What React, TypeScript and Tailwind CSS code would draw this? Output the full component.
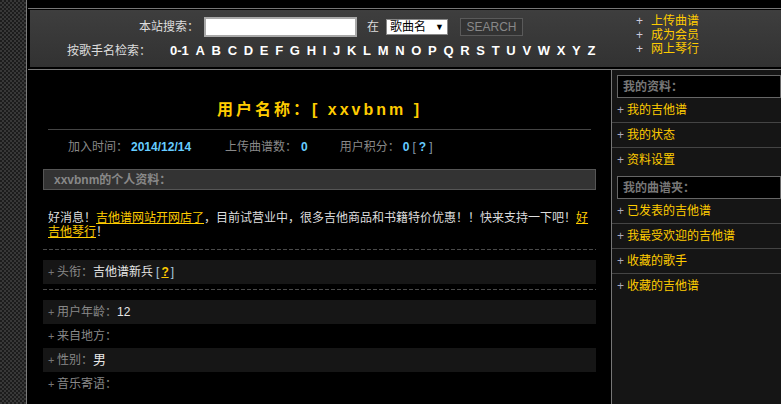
import React from "react";

const letters = "ABCDEFGHIJKLMNOPQRSTUVWXYZ".split("");

function InfoRow({
  label,
  shaded,
  children,
}: {
  label: string;
  shaded?: boolean;
  children?: React.ReactNode;
}) {
  return (
    <div
      className={
        shaded
          ? "h-[24px] flex items-center pl-[5px] bg-[#161616] leading-[14px]"
          : "h-[24px] flex items-center pl-[5px] leading-[14px]"
      }
    >
      <span className="text-[#777] text-[11px] w-[9px]">+</span>
      <span className="text-[#888]">{label}</span>
      {children}
    </div>
  );
}

function Dashed() {
  return (
    <div className="h-px bg-[image:repeating-linear-gradient(90deg,#4a4a4a_0_4px,transparent_4px_6px)]" />
  );
}

function SideHeader({ text }: { text: string }) {
  return (
    <div className="ml-[5px] h-[23px] border border-[#666] bg-black pl-[5px] flex items-center">
      <span className="font-bold text-[#777] leading-[14px]">{text}</span>
    </div>
  );
}

function SideItem({ text, last }: { text: string; last?: boolean }) {
  return (
    <>
      <div className="h-[24px] flex items-center pl-[5px] leading-[14px]">
        <span className="text-[#aab] w-[10px]">+</span>
        <span className="text-[#ffcc00]">{text}</span>
      </div>
      {!last && <div className="h-px bg-[#444]" />}
    </>
  );
}

export default function App() {
  return (
    <div className="w-[781px] h-[404px] overflow-hidden bg-black flex font-[Liberation_Sans,Noto_Sans_CJK_SC,sans-serif] text-[12px]">
      <div className="w-[26px] shrink-0 bg-[image:repeating-conic-gradient(#383838_0_25%,#1c1c1c_0_50%)] bg-[length:4px_4px]" />
      <div className="w-px shrink-0 bg-[#7a7a7a]" />
      <div className="flex-1 min-w-0 flex flex-col pl-px">
        <div className="h-[8px] shrink-0" />
        <div className="h-px shrink-0 bg-[#777]" />
        <div className="h-px shrink-0" />
        {/* header panel */}
        <div className="h-[57px] shrink-0 ml-[2px] flex bg-[linear-gradient(180deg,#3e3e3e,#323232)]">
          <div className="w-[606px] shrink-0 flex flex-col">
            <div className="flex items-center h-[20px] mt-[7px] pl-[109px]">
              <span className="text-[#ddd] leading-[14px] w-[65px]">本站搜索：</span>
              <div className="w-[153px] h-[20px] bg-white border-2 border-[#a9a9a9]" />
              <span className="text-[#ddd] leading-[14px] ml-[10px]">在</span>
              <div className="ml-[7px] w-[62px] h-[16px] bg-white border border-[#888] flex items-center justify-between px-[3px]">
                <span className="text-black leading-[14px]">歌曲名</span>
                <span className="text-black text-[9px] leading-[10px]">▼</span>
              </div>
              <div className="ml-[12px] w-[63px] h-[18px] bg-[#333] border border-[#5a5a5a] flex items-center justify-center text-[#888] leading-[14px]">
                SEARCH
              </div>
            </div>
            <div className="flex items-center h-[14px] mt-[7px] pl-[37px]">
              <span className="text-[#ddd] leading-[14px]">按歌手名检索：</span>
              <div className="ml-[19px] flex gap-[6.7px] text-white font-bold text-[13px] leading-[14px]">
                <span>0-1</span>
                {letters.map((l) => (
                  <span key={l}>{l}</span>
                ))}
              </div>
            </div>
          </div>
          <div className="pt-[4px] flex flex-col leading-[14px]">
            {["上传曲谱", "成为会员", "网上琴行"].map((t) => (
              <div key={t} className="flex">
                <span className="w-[15px] text-[#ccd]">+</span>
                <span className="text-[#ffcc00]">{t}</span>
              </div>
            ))}
          </div>
        </div>
        <div className="h-[2px] shrink-0" />
        <div className="h-px shrink-0 bg-[#777]" />
        {/* content */}
        <div className="flex-1 flex min-h-0">
          <div className="w-[583px] shrink-0 flex flex-col">
            <div className="pt-[30px] text-center">
              <div className="text-[16px] leading-[20px] font-bold tracking-[3px] text-[#ffcc00]">
                用户名称：[ xxvbnm ]
              </div>
            </div>
            <div className="mt-[9px] mx-[20px] h-px bg-[#444]" />
            <div className="mt-[10px] pl-[40px] flex leading-[14px]">
              <span className="text-[#888]">加入时间：</span>
              <span className="ml-[3px] font-bold text-[#66ccff]">2014/12/14</span>
              <span className="ml-[34px] text-[#888]">上传曲谱数：</span>
              <span className="ml-[4px] font-bold text-[#66ccff]">0</span>
              <span className="ml-[32px] text-[#888]">用户积分：</span>
              <span className="ml-[3px] font-bold text-[#66ccff]">0</span>
              <span className="ml-[3px] text-[#8899aa]">[</span>
              <span className="ml-[3px] font-bold text-[#66ccff]">?</span>
              <span className="ml-[3px] text-[#8899aa]">]</span>
            </div>
            <div className="mx-[15px] flex flex-col">
              <div className="mt-[15px] h-[21px] bg-[#333] border border-[#555] pl-[10px] flex items-center">
                <span className="font-bold text-[#888] leading-[14px]">xxvbnm的个人资料：</span>
              </div>
              <div className="mt-[21px] px-[5px] leading-[14px] text-[#ddd]">
                好消息！
                <a className="text-[#ffcc00] underline">吉他谱网站开网店了</a>
                ，目前试营业中，很多吉他商品和书籍特价优惠！！快来支持一下吧！
                <a className="text-[#ffcc00] underline">好吉他琴行</a>！
              </div>
              <div className="mt-[10px]">
                <Dashed />
              </div>
              <div className="mt-[10px]">
                <InfoRow label="头衔：" shaded>
                  <span className="text-[#e6e6e6]">吉他谱新兵</span>
                  <span className="ml-[3px] text-[#aac8dd]">[</span>
                  <span className="ml-[2px] font-bold text-[#ffcc00] underline">?</span>
                  <span className="ml-[2px] text-[#aac8dd]">]</span>
                </InfoRow>
              </div>
              <div className="mt-[5px]">
                <Dashed />
              </div>
              <div className="mt-[10px] flex flex-col">
                <InfoRow label="用户年龄：" shaded>
                  <span className="text-[#e6e6e6]">12</span>
                </InfoRow>
                <InfoRow label="来自地方：" />
                <InfoRow label="性别：" shaded>
                  <span className="text-[#e6e6e6] text-[13px]">男</span>
                </InfoRow>
                <InfoRow label="音乐寄语：" />
              </div>
            </div>
          </div>
          <div className="w-px shrink-0 bg-[#777]" />
          <div className="flex-1 bg-[#151515] pt-[5px] flex flex-col">
            <SideHeader text="我的资料：" />
            <SideItem text="我的吉他谱" />
            <SideItem text="我的状态" />
            <SideItem text="资料设置" last />
            <div className="mt-[4px]">
              <SideHeader text="我的曲谱夹：" />
            </div>
            <SideItem text="已发表的吉他谱" />
            <SideItem text="我最受欢迎的吉他谱" />
            <SideItem text="收藏的歌手" />
            <SideItem text="收藏的吉他谱" last />
          </div>
        </div>
      </div>
    </div>
  );
}
